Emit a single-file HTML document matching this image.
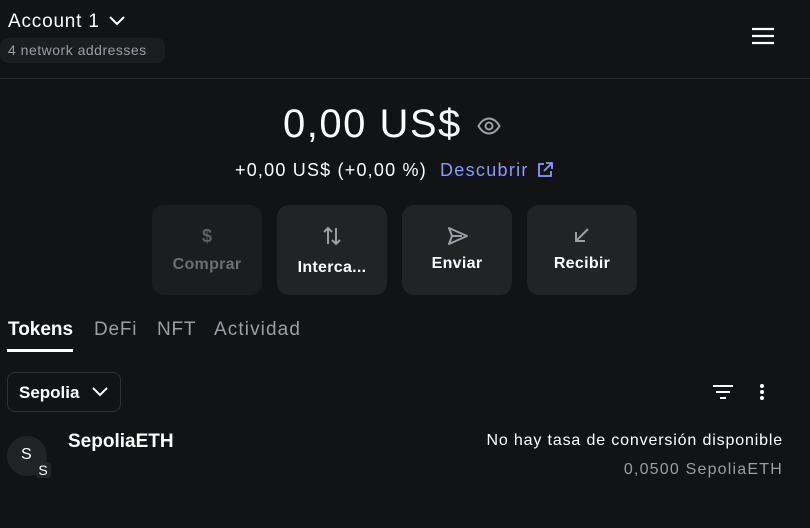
<!DOCTYPE html>
<html><head><style>
*{margin:0;padding:0;box-sizing:border-box}
body{width:810px;height:528px;background:#121314;font-family:"Liberation Sans",sans-serif;color:#fff;position:relative;overflow:hidden}
.a{position:absolute;white-space:nowrap}
.btn{position:absolute;top:205px;width:110px;height:90px;background:#222325;border-radius:12px;text-align:center;font-size:16px;font-weight:bold;letter-spacing:.3px}
.btn svg{position:absolute;left:47px;top:20px}
.btn span{position:absolute;left:0;right:0;top:50px}
.tab{position:absolute;top:319px;font-size:19px;color:#9b9ea6;letter-spacing:.8px}
</style></head><body>
<div class="a" style="left:8px;top:11px;font-size:19px;letter-spacing:.8px">Account 1</div>
<svg class="a" style="left:108px;top:14px" width="18" height="14" viewBox="0 0 18 14"><path d="M2 3l7 7 7-7" stroke="#fff" stroke-width="2" fill="none"/></svg>
<div class="a" style="left:0;top:38px;height:25px;width:165px;background:#1c1d1f;border-radius:8px"></div>
<div class="a" style="left:8px;top:42px;font-size:14px;color:#9b9ea6;letter-spacing:.5px">4 network addresses</div>
<svg class="a" style="left:751px;top:27px" width="24" height="18"><path d="M1 2h22M1 9h22M1 16h22" stroke="#fff" stroke-width="2.2"/></svg>
<div class="a" style="left:0;top:78px;width:810px;height:1px;background:#2b2c2f"></div>
<div class="a" style="left:283px;top:102px;font-size:40px;letter-spacing:1.5px">0,00 US$</div>
<svg class="a" style="left:477px;top:117px" width="24" height="18" viewBox="0 0 24 18"><path d="M1.5 9C5 3 9 1.5 12 1.5S19 3 22.5 9C19 15 15 16.5 12 16.5S5 15 1.5 9z" stroke="#9b9ea6" stroke-width="2" fill="none"/><circle cx="12" cy="9" r="3.5" stroke="#9b9ea6" stroke-width="2" fill="none"/></svg>
<div class="a" style="left:235px;top:160px;font-size:18px;letter-spacing:1.2px">+0,00 US$ (+0,00 %)</div>
<div class="a" style="left:440px;top:160px;font-size:18px;color:#8b99ff;letter-spacing:1.3px">Descubrir</div>
<svg class="a" style="left:537px;top:162px" width="16" height="16" viewBox="0 0 16 16"><path d="M7 2H2v12h12V9M9 1h6v6M15 1L7 9" stroke="#8b99ff" stroke-width="1.8" fill="none"/></svg>
<div class="btn" style="left:152px;background:#1c1d1f;color:#6b6e74"><svg width="16" height="22" viewBox="0 0 16 22"><text x="3" y="17" font-size="18" fill="#5d6066" font-family="Liberation Sans">$</text></svg><span style="top:51px">Comprar</span></div>
<div class="btn" style="left:277px"><svg width="20" height="22" viewBox="0 0 20 22" style="left:45px"><path d="M6 19V3M2 7l4-4 4 4M14 3v16M10 15l4 4 4-4" stroke="#9b9ea6" stroke-width="2" fill="none"/></svg><span style="top:54px">Interca...</span></div>
<div class="btn" style="left:402px"><svg width="22" height="20" viewBox="0 0 22 20" style="left:45px;top:21px"><path d="M2 2l18 8-18 8 3-8z M5 10h10" stroke="#9b9ea6" stroke-width="2" fill="none" stroke-linejoin="round"/></svg><span>Enviar</span></div>
<div class="btn" style="left:527px"><svg width="18" height="18" viewBox="0 0 18 18" style="left:46px;top:21px"><path d="M15 3L3 15M3 6v9h9" stroke="#9b9ea6" stroke-width="2" fill="none"/></svg><span>Recibir</span></div>
<div class="tab" style="left:8px;color:#fff;font-weight:bold;letter-spacing:0">Tokens</div>
<div class="a" style="left:7px;top:349px;width:66px;height:3px;background:#fff"></div>
<div class="tab" style="left:94px">DeFi</div>
<div class="tab" style="left:157px">NFT</div>
<div class="tab" style="left:214px;letter-spacing:1.1px">Actividad</div>
<div class="a" style="left:7px;top:372px;width:114px;height:40px;border:1px solid #2f3034;border-radius:8px"></div>
<div class="a" style="left:19px;top:383px;font-size:17px;font-weight:bold">Sepolia</div>
<svg class="a" style="left:91px;top:385px" width="18" height="14"><path d="M2 3l7 7 7-7" stroke="#fff" stroke-width="2" fill="none"/></svg>
<svg class="a" style="left:712px;top:384px" width="22" height="16"><path d="M1 2h20M4 8h14M8 14h6" stroke="#fff" stroke-width="2"/></svg>
<svg class="a" style="left:759px;top:383px" width="6" height="18"><circle cx="3" cy="3" r="2" fill="#fff"/><circle cx="3" cy="9" r="2" fill="#fff"/><circle cx="3" cy="15" r="2" fill="#fff"/></svg>
<div class="a" style="left:7px;top:436px;width:40px;height:40px;border-radius:50%;background:#222325"></div>
<div class="a" style="left:21px;top:446px;font-size:16px">S</div>
<div class="a" style="left:35px;top:462px;width:16px;height:16px;border-radius:4px;background:#222325;font-size:14px;text-align:center;line-height:17px">S</div>
<div class="a" style="left:68px;top:431px;font-size:19px;font-weight:bold">SepoliaETH</div>
<div class="a" style="right:27px;top:432px;font-size:16px;letter-spacing:.85px">No hay tasa de conversión disponible</div>
<div class="a" style="right:27px;top:461px;font-size:16px;color:#9b9ea6;letter-spacing:1.2px">0,0500 SepoliaETH</div>
</body></html>
